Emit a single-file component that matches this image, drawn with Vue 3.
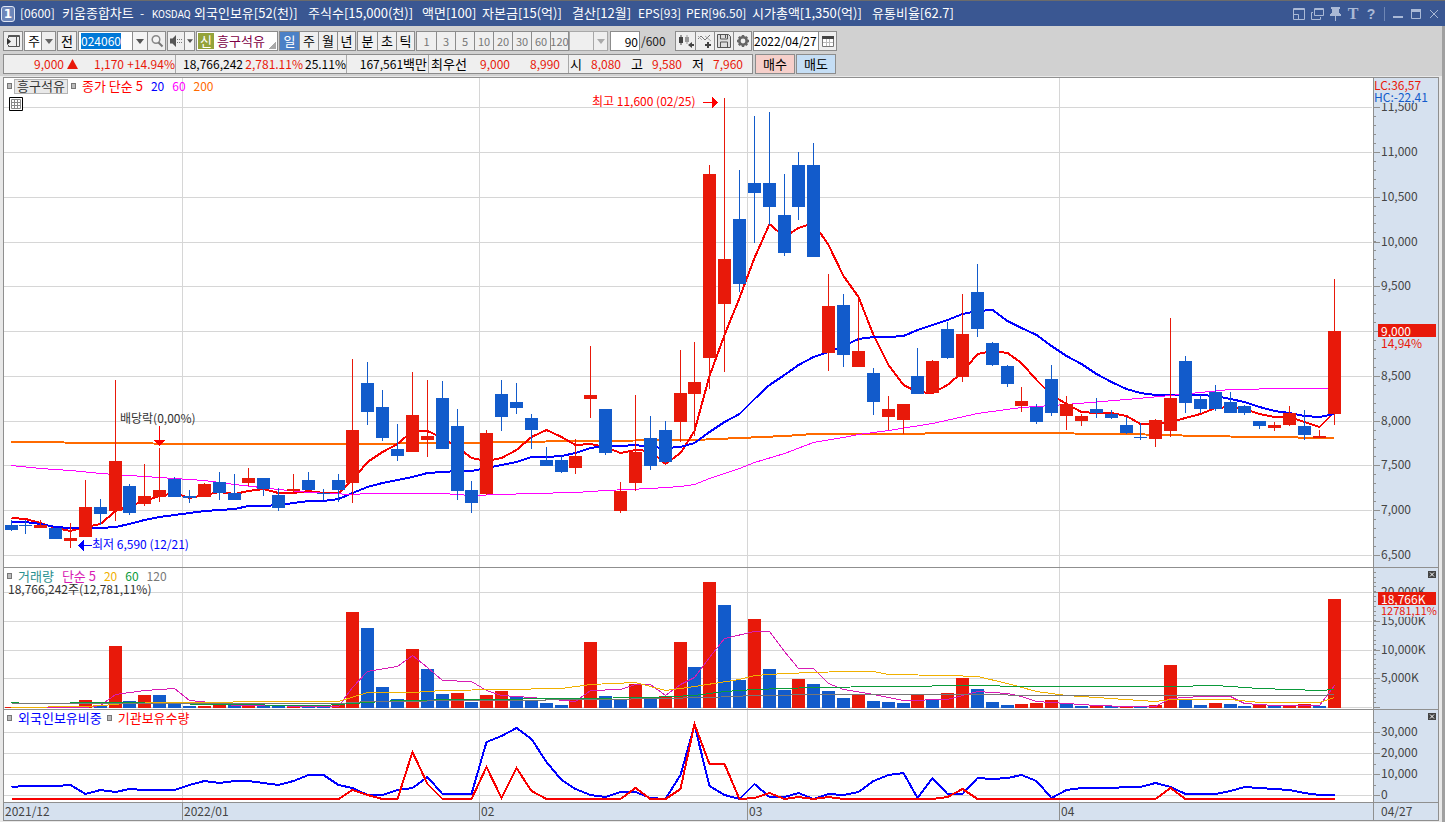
<script setup>
import { ref, onMounted } from 'vue'

const codeInput = ref(null)
const code = ref('024060')
const period = ref('일')
const count = ref('90')
const date = ref('2022/04/27')

onMounted(() => {
  codeInput.value.focus()
  codeInput.value.select()
})

const titleParts = [
  '[0600]', '키움종합차트', '-', 'KOSDAQ', '외국인보유[52(천)]', '주식수[15,000(천)]', '액면[100]',
  '자본금[15(억)]', '결산[12월]', 'EPS[93]', 'PER[96.50]', '시가총액[1,350(억)]', '유통비율[62.7]',
]
// Each title field takes one cell per half-width character and two per Hangul syllable.
const cellWidth = (s) => ([...s].reduce((n, c) => n + (c > '\u1100' ? 2 : 1), 0) + 1) * 6

const dayPeriods = ['일', '주', '월', '년']
const tickPeriods = ['분', '초', '틱']
const minutes = ['1', '3', '5', '10', '20', '30', '60', '120']

const PLOT = { x: 4, w: 1369 }
const cx = (i) => Math.floor(11 + i * 14.867)

const R = 'up'
const B = 'down'
// high, body top, body bottom, low
const candles = [
  [520, 525, 530, 531, B], [520, 525, 526, 534, B], [520, 525, 528, 528, R], [528, 528, 539, 539, B], [523, 538, 541, 548, R],
  [480, 507, 537, 537, R], [499, 507, 514, 525, B], [380, 461, 511, 521, R], [484, 486, 513, 515, B], [464, 496, 504, 506, R],
  [448, 490, 497, 502, R], [477, 479, 497, 497, B], [490, 496, 498, 503, B], [483, 484, 497, 497, R], [472, 482, 493, 500, B],
  [474, 493, 500, 500, B], [468, 478, 483, 486, R], [478, 478, 489, 496, B], [488, 495, 508, 511, B], [474, 489, 491, 492, R],
  [472, 480, 490, 490, B], [489, 493, 494, 500, B], [474, 480, 490, 502, B], [359, 430, 483, 503, R], [362, 383, 412, 425, B],
  [390, 407, 438, 441, B], [424, 449, 456, 461, B], [372, 415, 452, 452, R], [380, 436, 440, 457, R], [381, 398, 449, 449, B],
  [409, 426, 491, 500, B], [481, 490, 503, 513, B], [430, 433, 494, 495, R], [380, 394, 417, 431, B], [383, 402, 408, 414, B],
  [414, 418, 430, 449, B], [447, 460, 466, 466, B], [456, 460, 472, 473, B], [439, 456, 468, 474, R], [346, 395, 399, 418, R],
  [409, 409, 453, 455, B], [482, 491, 511, 513, R], [395, 452, 483, 491, R], [416, 438, 466, 470, B], [421, 430, 462, 463, B],
  [350, 393, 422, 442, R], [342, 382, 394, 436, R], [165, 174, 358, 389, R], [98, 259, 304, 372, R], [170, 219, 284, 292, B],
  [116, 183, 193, 243, B], [112, 183, 207, 225, B], [174, 215, 253, 256, B], [152, 165, 207, 220, B], [143, 165, 257, 257, B],
  [274, 306, 353, 371, R], [294, 305, 355, 367, B], [300, 351, 367, 367, R], [368, 373, 402, 415, B], [396, 409, 417, 430, R],
  [404, 404, 420, 434, R], [348, 376, 394, 394, B], [360, 361, 393, 393, R], [322, 329, 358, 359, B], [294, 334, 377, 382, R],
  [264, 292, 329, 337, B], [342, 343, 365, 366, B], [365, 366, 384, 387, B], [387, 401, 406, 412, R], [404, 407, 422, 424, B],
  [365, 379, 413, 416, B], [396, 404, 416, 430, R], [414, 416, 421, 426, R], [398, 409, 413, 418, B], [410, 414, 418, 419, B],
  [417, 425, 433, 434, B], [423, 437, 438, 440, B], [419, 420, 439, 447, R], [318, 398, 431, 437, R], [356, 361, 403, 413, B],
  [395, 399, 409, 413, B], [385, 392, 409, 411, B], [392, 402, 413, 413, B], [405, 406, 413, 415, B], [421, 421, 426, 429, B],
  [422, 425, 428, 431, R], [406, 413, 425, 426, R], [410, 426, 435, 440, B], [430, 436, 438, 438, R], [279, 331, 414, 425, R],
]

const V = {
  top: [707, 707, 707, 707, 707, 700, 706, 646, 701, 695, 695, 704, 706, 706, 705, 705, 706, 706, 706, 706, 706, 706, 704,
    612, 628, 687, 699, 649, 669, 694, 693, 702, 695, 691, 696, 700, 703, 705, 700, 642, 696, 700, 684, 697, 696, 642, 667,
    582, 605, 680, 619, 669, 690, 679, 684, 691, 698, 695, 701, 702, 703, 694, 699, 693, 678, 689, 702, 705, 704, 703, 700,
    704, 706, 705, 706, 706, 707, 705, 665, 700, 705, 703, 704, 706, 705, 706, 706, 704, 706, 599],
  dir: 'RRRRRRBRBRBBBRRBRBBRBBRRBBBRBBRBRRBBBBRRBBRBRRBRBBRBBRBBBRBBBRBRRBBBRRRBBRBRBRRBBRBBRBRRBR',
}

// Sparse [index, y] points joined by straight segments.
const ma5 = [518, 519, 523, 528, 531, 527, 524, 511, 506, 501, 496, 493, 498, 495, 492, 494, 491, 489, 493, 493, 491, 493, 493,
  480, 462, 452, 444, 431, 431, 438, 447, 458, 461, 458, 450, 437, 430, 437, 445, 444, 447, 453, 450, 451, 464, 453, 431, 376,
  335, 298, 258, 224, 237, 228, 223, 245, 276, 297, 335, 365, 385, 392, 393, 385, 372, 354, 351, 353, 363, 380, 395, 404, 412,
  413, 413, 416, 424, 424, 422, 418, 414, 408, 407, 409, 414, 417, 417, 422, 427, 412].map((y, i) => [i, y])
const ma20 = [522, 522, 524, 527, 528, 528, 528, 527, 524, 520, 517, 515, 513, 511, 510, 509, 506, 506, 505, 503, 501, 501,
  499, 493, 487, 483, 480, 477, 473, 472, 471, 471, 468, 465, 462, 457, 457, 456, 453, 448, 446, 446, 445, 447, 448, 447, 443,
  432, 422, 414, 399, 385, 375, 365, 357, 352, 346, 339, 337, 337, 336, 330, 325, 320, 314, 311, 310, 321, 328, 335, 346, 356,
  364, 374, 382, 389, 393, 395, 395, 395, 395, 396, 399, 402, 407, 411, 413, 416, 417, 414].map((y, i) => [i, y])
const ma60 = [[0, 465], [2, 468], [4, 470], [6, 473], [8, 475], [10, 477], [13, 480], [15, 484], [18, 489], [20, 492], [23, 494],
  [24, 493], [29, 493], [31, 495], [33, 494], [35, 493], [38, 492], [40, 490], [43, 488], [45, 486], [46, 484], [47, 478],
  [49, 468], [50, 462], [52, 453], [54, 442], [56, 437], [57, 434], [59, 430], [62, 423], [65, 413], [68, 407], [71, 404],
  [75, 399], [78, 395], [80, 392], [82, 389], [86, 388], [89, 388]]
const ma200 = [[0, 442], [7, 443], [12, 444], [22, 444], [30, 443], [34, 442], [38, 441], [46, 440], [49, 438], [52, 436],
  [54, 434], [60, 434], [63, 433], [68, 433], [75, 434], [80, 436], [84, 437], [89, 438]]

const v5 = [[0, 707], [5, 707], [6, 705], [7, 694], [9, 690], [11, 688], [12, 700], [14, 703], [15, 705], [22, 706], [23, 687],
  [24, 671], [26, 666], [27, 655], [28, 667], [29, 680], [31, 681], [32, 690], [33, 695], [35, 697], [38, 701], [39, 690],
  [41, 689], [42, 684], [43, 684], [44, 695], [45, 684], [46, 677], [47, 657], [48, 638], [50, 631], [51, 631], [52, 651],
  [53, 668], [54, 668], [55, 683], [56, 689], [58, 694], [60, 700], [63, 699], [65, 691], [67, 693], [68, 696], [69, 701],
  [71, 703], [73, 705], [75, 706], [77, 706], [78, 698], [80, 696], [82, 696], [83, 703], [85, 705], [88, 705], [89, 685]]
const v20 = [[0, 707], [5, 706], [7, 704], [8, 702], [22, 701], [24, 692], [27, 692], [29, 690], [33, 689], [37, 688], [39, 684],
  [42, 682], [43, 686], [44, 690], [46, 686], [49, 679], [50, 675], [52, 673], [56, 671], [58, 671], [59, 674], [63, 675],
  [65, 676], [67, 683], [69, 691], [71, 695], [76, 700], [77, 701], [78, 699], [82, 699], [84, 702], [88, 702], [89, 697]]
const v60 = [[0, 702], [1, 703], [7, 702], [11, 703], [13, 704], [21, 705], [23, 703], [26, 700], [31, 699], [38, 698], [43, 697],
  [46, 695], [48, 691], [50, 689], [54, 687], [59, 686], [65, 685], [68, 686], [78, 686], [81, 685], [84, 688], [88, 690], [89, 689]]
const v120 = [[0, 703], [22, 703], [24, 701], [32, 700], [40, 699], [47, 697], [50, 695], [55, 694], [64, 694], [70, 695], [88, 695], [89, 694]]

const foreign = [787, 786, 786, 786, 785, 794, 790, 792, 789, 790, 790, 790, 785, 781, 783, 781, 781, 783, 785, 781, 775, 775,
  785, 788, 795, 795, 790, 788, 777, 794, 794, 794, 742, 736, 728, 739, 762, 780, 789, 795, 797, 792, 792, 798, 799, 775, 725,
  786, 795, 799, 784, 797, 797, 793, 799, 794, 795, 792, 781, 775, 773, 798, 778, 794, 794, 778, 779, 778, 775, 781, 798, 790,
  788, 788, 788, 787, 787, 783, 787, 794, 794, 794, 791, 787, 788, 789, 790, 793, 795, 795].map((y, i) => [i, y])
const inst = [[0, 799], [22, 799], [23, 790], [24, 795], [25, 799], [26, 799], [27, 752], [28, 784], [29, 799], [31, 799],
  [32, 767], [33, 798], [34, 768], [35, 791], [36, 799], [41, 799], [42, 788], [43, 799], [44, 799], [45, 789], [46, 724],
  [47, 764], [48, 764], [49, 799], [50, 798], [51, 793], [52, 799], [53, 797], [54, 799], [55, 797], [56, 799], [62, 799],
  [63, 797], [64, 789], [65, 799], [77, 799], [78, 788], [79, 799], [89, 799]]

const pts = (list) => list.map(([i, y]) => `${cx(i) + 0.5},${y}`).join(' ')
// One-pixel strokes run through pixel centres so that flat stretches stay visible.
const thinPts = (list) => list.map(([i, y]) => `${cx(i) + 0.5},${y + 0.5}`).join(' ')

const months = [
  { x: 4, label: '2021/12' }, { x: 182, label: '2022/01' }, { x: 479, label: '02' },
  { x: 747, label: '03' }, { x: 1059, label: '04' },
]
const left = (x) => `${((x - PLOT.x) / PLOT.w) * 100}%`

const range = (from, to, n) => Array.from({ length: n }, (_, k) => Math.round(from + (k * (to - from)) / (n - 1)))
const price = {
  y: 78, h: 489,
  major: [107, 152, 197, 242, 286, 331, 376, 421, 465, 510, 555],
  labels: ['11,500', '11,000', '10,500', '10,000', '9,500', '9,000', '8,500', '8,000', '7,500', '7,000', '6,500'],
  minor: range(107, 555, 51),
}
const volume = {
  y: 568, h: 141,
  major: [592, 621, 650, 678, 707],
  labels: ['20,000K', '15,000K', '10,000K', '5,000K', ''],
  minor: range(572, 707, 29),
}
const holding = {
  y: 710, h: 92,
  major: [732, 753, 774, 795],
  labels: ['30,000', '20,000', '10,000', '0'],
  minor: range(722, 795, 8),
}
const top = (p, y) => `${((y - p.y) / p.h) * 100}%`
const viewBox = (p) => `${PLOT.x} ${p.y} ${PLOT.w} ${p.h}`
</script>

<template>
  <div class="window">
    <header class="title-bar">
      <span class="badge">1</span>
      <h1 class="title">
        <span v-for="p in titleParts" :key="p" :class="{ latin: p < '\u1100', tight: p === 'KOSDAQ' }" :style="{ width: cellWidth(p) + 'px' }">{{ p }}</span>
      </h1>
      <div class="win-tools">
        <button type="button" aria-label="창 붙이기"><svg width="14" height="14" viewBox="0 0 14 14"><path d="M1.500 1.500h11v11h-11zM1.500 7.500h5v5M1 2.500h12" /></svg></button>
        <button type="button" aria-label="창 복제"><svg width="14" height="14" viewBox="0 0 14 14"><path d="M4.500 1.500h9v7h-9zM4 2.500h9M3 5.500H1.500v7h9V10" /></svg></button>
        <button type="button" aria-label="고정"><svg width="14" height="14" viewBox="0 0 14 14"><path class="solid" d="M3 0h9v2h-1v4h1v1h1v2H2V7h1V6h1V2H3zM7 9h1v5H7z" /></svg></button>
        <button type="button" class="serif">T</button>
        <button type="button" class="quest">?</button>
        <i class="split"></i>
        <button type="button" aria-label="최소화"><svg width="14" height="14" viewBox="0 0 14 14"><path class="solid" d="M2 9h10v2H2z" /></svg></button>
        <button type="button" aria-label="최대화"><svg width="14" height="14" viewBox="0 0 14 14"><path d="M2.500 3.500h9v8h-9z" /><path class="solid" d="M2 2h10v3H2z" /></svg></button>
        <button type="button" aria-label="닫기"><svg width="14" height="14" viewBox="0 0 14 14"><path d="M3 3l8 8M11 3l-8 8" /></svg></button>
      </div>
    </header>

    <section class="tools">
      <div class="row">
        <button type="button" class="box sq" aria-label="메뉴 펼치기">
          <svg width="16" height="16" viewBox="0 0 16 16"><path d="M3.500 5V2.500h11v11h-11V12M3 3.500h11M11.500 4v9" fill="none" stroke="#555" /><path d="M2 5l4 3.500L2 12z" fill="#333" /></svg>
        </button>
        <label class="box pick kind">
          <select aria-label="종목 구분"><option>주</option></select>
          <span class="arrow"><svg width="8" height="5" viewBox="0 0 8 5"><path d="M0 0h8L4 5z" /></svg></span>
        </label>
        <button type="button" class="box sq">전</button>
        <div class="box code">
          <input ref="codeInput" v-model="code" aria-label="종목코드" />
          <button type="button" class="drop" aria-label="종목 목록"><svg width="8" height="5" viewBox="0 0 8 5"><path d="M0 0h8L4 5z" /></svg></button>
          <button type="button" class="face" aria-label="검색">
            <svg width="14" height="14" viewBox="0 0 14 14"><circle cx="6" cy="5.500" r="3.800" fill="#f4f4f4" stroke="#888" stroke-width="1.500" /><path d="M8.500 8.500l4 4" stroke="#777" stroke-width="2" /></svg>
          </button>
        </div>
        <div class="box sound">
          <button type="button" class="face" aria-label="소리">
            <svg width="14" height="14" viewBox="0 0 14 14"><path d="M1 4.500h2.500L7 1v12L3.500 9.500H1z" fill="#555" /><path d="M8 5h1v1H8zM8 8h1v1H8zM10 5h1v1h-1zM10 8h1v1h-1zM12 5h1v1h-1zM12 8h1v1h-1z" fill="#777" /></svg>
          </button>
          <button type="button" class="drop slim" aria-label="소리 설정"><svg width="6" height="4" viewBox="0 0 8 5"><path d="M0 0h8L4 5z" /></svg></button>
        </div>
        <div class="box name"><span class="new">신</span><span>흥구석유</span><i class="corner"></i></div>
        <div class="box group">
          <button v-for="p in dayPeriods" :key="p" type="button" :class="{ on: p === period }" @click="period = p">{{ p }}</button>
        </div>
        <div class="box group">
          <button v-for="p in tickPeriods" :key="p" type="button">{{ p }}</button>
        </div>
        <div class="box group dim">
          <button v-for="m in minutes" :key="m" type="button">{{ m }}</button>
        </div>
        <label class="box pick blank">
          <select aria-label="분 단위" disabled><option></option></select>
          <span class="arrow"><svg width="8" height="5" viewBox="0 0 8 5"><path d="M0 0h8L4 5z" /></svg></span>
        </label>
        <input v-model="count" class="box count" aria-label="표시 봉수" />
        <span class="total">/600</span>
        <div class="box icons">
          <button type="button" aria-label="봉 추가">
            <svg width="16" height="16" viewBox="0 0 16 16"><path d="M1 4h4v6H1zM2.500 2h1v10h-1z" fill="#444" /><path d="M7 4h4v5H7zM8.500 2h1v9h-1z" fill="#999" /><path d="M14 9v6l-4-3zM13 11h3v2h-3z" fill="#444" /></svg>
          </button>
          <button type="button" aria-label="지표 추가">
            <svg width="16" height="16" viewBox="0 0 16 16"><path d="M1 6l3-3 4 4 5-5" fill="none" stroke="#777" /><path d="M1 3l4 4M8 3l6 5" fill="none" stroke="#aaa" /><path d="M8 12h6M11 9v6" stroke="#444" stroke-width="2" /></svg>
          </button>
          <button type="button" aria-label="저장">
            <svg width="16" height="16" viewBox="0 0 16 16"><path d="M1.500 1.500h11l2 2v11h-13z" fill="#ddd" stroke="#555" /><path d="M4.500 2v4h7V2M9.500 2v3M4.500 14V9h7v5" fill="none" stroke="#555" /></svg>
          </button>
          <button type="button" aria-label="설정">
            <svg width="16" height="16" viewBox="0 0 16 16"><circle cx="8" cy="8" r="3.700" fill="none" stroke="#666" stroke-width="2.600" /><path d="M8 2v2M8 12v2M2 8h2M12 8h2M3.800 3.800l1.400 1.400M10.800 10.800l1.400 1.400M3.800 12.200l1.400-1.400M10.800 5.200l1.400-1.400" stroke="#666" stroke-width="2.400" /></svg>
          </button>
        </div>
        <div class="box date">
          <input v-model="date" aria-label="기준일" />
          <button type="button" aria-label="달력">
            <svg width="14" height="14" viewBox="0 0 14 14"><path d="M1.500 3.500h11v9h-11z" fill="#fff" stroke="#777" /><path d="M1 2h12v3H1z" fill="#444" /><path d="M2 8.500h10M5.500 5v7M8.500 5v7" stroke="#bbb" /></svg>
          </button>
        </div>
      </div>

      <div class="row">
        <div class="box quote">
          <div class="seg q1 red"><span>9,000</span><svg width="11" height="10" viewBox="0 0 11 10"><path d="M5.500 0L11 10H0z" fill="#e8190a" /></svg><span>1,170</span><span>+14.94%</span></div>
          <div class="seg q2"><span>18,766,242</span><span class="red">2,781.11%</span><span>25.11%</span></div>
          <div class="seg q3"><span>167,561<b>백만</b></span></div>
          <div class="seg q4"><b>최우선</b><span class="red">9,000</span><span class="red">8,990</span></div>
          <div class="seg q5"><b>시</b><span class="red">8,080</span><b>고</b><span class="red">9,580</span><b>저</b><span class="red">7,960</span></div>
        </div>
        <button type="button" class="box trade buy">매수</button>
        <button type="button" class="box trade sell">매도</button>
      </div>
    </section>

    <main class="chart">
      <section class="panel price">
        <div class="plot">
          <svg class="canvas" :viewBox="viewBox(price)" preserveAspectRatio="none" shape-rendering="crispEdges">
            <g class="grid">
              <rect v-for="y in price.major" :key="y" x="4" :y="y" width="1368" height="1" />
              <rect v-for="m in months.slice(1)" :key="m.x" :x="m.x" y="78" width="1" height="489" />
            </g>
            <polyline :points="pts(ma200)" class="orange thick" />
            <polyline :points="pts(ma5)" class="red5 thick" />
            <polyline :points="pts(ma20)" class="blue thick" />
            <polyline :points="thinPts(ma60)" class="pink" />
            <g v-for="(c, i) in candles" :key="i" :class="c[4]">
              <rect :x="cx(i)" :y="c[0]" width="1" :height="c[3] - c[0]" />
              <rect :x="cx(i) - 6" :y="c[1]" width="13" :height="c[2] - c[1]" />
            </g>
            <g class="mark-red"><rect x="703" y="102" width="10" height="1" /><path d="M712 97v11l6-5.500z" /></g>
            <g class="mark-blue"><rect x="83" y="545" width="9" height="1" /><path d="M84 540v11l-6-5.500z" /></g>
            <g class="mark-red"><rect x="159" y="426" width="1" height="16" /><path d="M154 440h11l-5.500 6z" /></g>
          </svg>
          <div class="legend">
            <i class="knob"></i><button type="button" class="symbol">흥구석유</button><i class="knob"></i>
            <span class="c-red">종가 단순 5</span><span class="num c-blue">20</span><span class="num c-pink">60</span><span class="num c-orange">200</span>
          </div>
          <button type="button" class="table-btn" aria-label="표 보기">
            <svg width="14" height="14" viewBox="0 0 14 14"><path d="M.5.500h13v13H.5z" fill="#fff" stroke="#000" /><path d="M2.500 2.500h9v9h-9zM2.500 5.500h9M2.500 8.500h9M5.500 2v9M8.500 2v9" fill="none" stroke="#888" /></svg>
          </button>
          <span class="note c-red" :style="{ left: left(592), top: top(price, 101) }">최고 11,600 (02/25)</span>
          <span class="note c-blue" :style="{ left: left(92), top: top(price, 544) }">최저 6,590 (12/21)</span>
          <span class="note" :style="{ left: left(120), top: top(price, 418) }">배당락(0,00%)</span>
        </div>
        <div class="axis">
          <svg class="canvas" :viewBox="`0 ${price.y} 64 ${price.h}`" preserveAspectRatio="none" shape-rendering="crispEdges">
            <rect v-for="y in price.minor" :key="'n' + y" x="0" :y="y" width="2" height="1" />
            <rect v-for="y in price.major" :key="y" x="0" :y="y" width="6" height="1" />
          </svg>
          <span v-for="(l, k) in price.labels" :key="l" class="tick" :style="{ top: top(price, price.major[k]) }">{{ l }}</span>
          <span class="extreme"><span class="up-text">LC:36,57</span><span class="down-text">HC:-22,41</span></span>
          <span class="rate" :style="{ top: top(price, 342) }">14,94%</span>
          <span class="now" :style="{ top: top(price, 330) }">9,000</span>
        </div>
      </section>

      <section class="panel volume">
        <div class="plot">
          <svg class="canvas" :viewBox="viewBox(volume)" preserveAspectRatio="none" shape-rendering="crispEdges">
            <g class="grid">
              <rect v-for="y in volume.major" :key="y" x="4" :y="y" width="1368" height="1" />
              <rect v-for="m in months.slice(1)" :key="m.x" :x="m.x" y="568" width="1" height="141" />
            </g>
            <rect v-for="(y, i) in V.top" :key="i" :class="V.dir[i] === 'R' ? 'up' : 'down'" :x="cx(i) - 6" :y="y" width="13" :height="708 - y" />
            <polyline :points="thinPts(v5)" class="magenta" />
            <polyline :points="thinPts(v20)" class="yellow" />
            <polyline :points="thinPts(v60)" class="green" />
            <polyline :points="thinPts(v120)" class="gray" />
          </svg>
          <div class="legend">
            <i class="knob"></i><span class="c-teal">거래량</span><span class="c-magenta">단순 5</span><span class="num c-yellow">20</span><span class="num c-green">60</span><span class="num c-gray">120</span>
          </div>
          <div class="legend second">18,766,242주(12,781,11%)</div>
        </div>
        <div class="axis">
          <svg class="canvas" :viewBox="`0 ${volume.y} 64 ${volume.h}`" preserveAspectRatio="none" shape-rendering="crispEdges">
            <rect v-for="y in volume.minor" :key="'n' + y" x="0" :y="y" width="2" height="1" />
            <rect v-for="y in volume.major" :key="y" x="0" :y="y" width="6" height="1" />
          </svg>
          <span v-for="(l, k) in volume.labels" :key="k" class="tick" :style="{ top: top(volume, volume.major[k]) }">{{ l }}</span>
          <span class="rate small" :style="{ top: top(volume, 610) }">12781,11%</span>
          <span class="now" :style="{ top: top(volume, 598) }">18,766K</span>
          <button type="button" class="close" aria-label="거래량 닫기"><svg width="8" height="7" viewBox="0 0 8 7"><path d="M2 1.500l4 4M6 1.500l-4 4" stroke="#fff" /></svg></button>
        </div>
      </section>

      <section class="panel holding">
        <div class="plot">
          <svg class="canvas" :viewBox="viewBox(holding)" preserveAspectRatio="none" shape-rendering="crispEdges">
            <g class="grid">
              <rect v-for="y in holding.major" :key="y" x="4" :y="y" width="1368" height="1" />
              <rect v-for="m in months.slice(1)" :key="m.x" :x="m.x" y="710" width="1" height="92" />
            </g>
            <polyline :points="pts(foreign)" class="blue thick" />
            <polyline :points="pts(inst)" class="red5 thick" />
          </svg>
          <div class="legend">
            <i class="knob"></i><span class="c-blue">외국인보유비중</span><i class="knob"></i><span class="c-red">기관보유수량</span>
          </div>
        </div>
        <div class="axis">
          <svg class="canvas" :viewBox="`0 ${holding.y} 64 ${holding.h}`" preserveAspectRatio="none" shape-rendering="crispEdges">
            <rect v-for="y in holding.minor" :key="'n' + y" x="0" :y="y" width="2" height="1" />
            <rect v-for="y in holding.major" :key="y" x="0" :y="y" width="6" height="1" />
          </svg>
          <span v-for="(l, k) in holding.labels" :key="l" class="tick" :style="{ top: top(holding, holding.major[k]) }">{{ l }}</span>
          <button type="button" class="close" aria-label="보유 지표 닫기"><svg width="8" height="7" viewBox="0 0 8 7"><path d="M2 1.500l4 4M6 1.500l-4 4" stroke="#fff" /></svg></button>
        </div>
      </section>

      <footer class="dates">
        <div class="months"><span v-for="m in months" :key="m.x" :style="{ left: left(m.x) }">{{ m.label }}</span></div>
        <div class="last">04/27</div>
      </footer>
    </main>
  </div>
</template>

<style>
body {
  margin: 0;
}
</style>

<style scoped>
.window {
  display: flex;
  flex-direction: column;
  height: 100vh;
  min-height: 480px;
  min-width: 960px;
  overflow: hidden;
  background: #a0a0a0;
  color: #000;
  font: 13px/16px "Noto Sans CJK KR", sans-serif;
}
.window * {
  box-sizing: border-box;
}
button,
input,
select {
  margin: 0;
  padding: 0;
  border: 0;
  border-radius: 0;
  outline: 0;
  background: none;
  color: inherit;
  font: inherit;
}
button {
  display: flex;
  align-items: center;
  justify-content: center;
  white-space: nowrap;
}

.title-bar {
  display: flex;
  align-items: center;
  flex: none;
  height: 26px;
  padding: 0 4px 0 1px;
  border-top: 1px solid #6b6b6b;
  background: #3a5792;
  color: #fff;
}
.badge {
  width: 14px;
  height: 16px;
  border: 1px solid #dfe6f3;
  border-radius: 3px;
  background: #6d86b9;
  font: bold 12px/14px "DejaVu Sans", sans-serif;
  text-align: center;
}
.title {
  display: flex;
  align-items: baseline;
  flex: 1;
  min-width: 0;
  margin: 0 0 0 5px;
  font: inherit;
  line-height: 24px;
  white-space: nowrap;
}
.title span {
  flex: none;
}
.title .latin {
  font-size: 12px;
}
.title .tight {
  font-family: Roboto, sans-serif;
  font-size: 10px;
}
.win-tools {
  display: flex;
  align-items: center;
  gap: 4px;
  color: #aab9d6;
}
.win-tools button {
  width: 14px;
  height: 16px;
}
.win-tools path {
  fill: none;
  stroke: #aab9d6;
}
.win-tools .solid {
  fill: #aab9d6;
  stroke: none;
}
.win-tools .serif {
  font: bold 16px/16px "Liberation Serif", serif;
}
.win-tools .quest {
  font: bold 14px/16px "Liberation Sans", sans-serif;
}
.split {
  width: 1px;
  height: 14px;
  margin: 0 2px;
  background: #6f87b5;
}

.tools {
  display: flex;
  flex-direction: column;
  gap: 3px;
  flex: none;
  height: 50px;
  margin-right: 3px;
  padding: 5px 3px 0;
  background: #d1d1d1;
}
.row {
  display: flex;
  gap: 1px;
  flex: none;
}
.box {
  display: flex;
  flex: none;
  height: 20px;
  border: 1px solid #8c8c8c;
  background: #efefef;
}
.box.sq {
  width: 20px;
}
.pick {
  position: relative;
  background: #fff;
}
.pick select {
  width: 100%;
  padding-left: 3px;
  appearance: none;
}
.arrow {
  position: absolute;
  top: 0;
  right: 0;
  display: flex;
  align-items: center;
  justify-content: center;
  width: 14px;
  height: 18px;
  border-left: 1px solid #8c8c8c;
  background: #efefef;
  fill: #666;
  pointer-events: none;
}
.kind {
  width: 32px;
}
.blank {
  width: 39px;
  margin-left: -1px;
  margin-right: 1px;
  background: #efefef;
  border-color: #a8a8a8;
}
.blank .arrow {
  border-color: #a8a8a8;
  fill: #aaa;
}
.code {
  width: 88px;
  background: #fff;
  font-size: 12px;
}
.code input {
  flex: 1;
  min-width: 0;
  padding-left: 2px;
}
.code input::selection {
  background: #0078d7;
  color: #fff;
}
.drop {
  width: 15px;
  border-left: 1px solid #8c8c8c;
  background: #f4f4f4;
  fill: #555;
}
.drop.slim {
  width: 10px;
}
.face {
  width: 18px;
  border-left: 1px solid #8c8c8c;
  background: #efefef;
}
.sound {
  width: 28px;
}
.sound .face {
  width: 16px;
  border-left: 0;
}
.name {
  position: relative;
  align-items: center;
  gap: 3px;
  width: 82px;
  padding-left: 1px;
  background: #fff;
  color: #7d0045;
}
.new {
  width: 16px;
  height: 16px;
  background: #94a33a;
  color: #fff;
  text-align: center;
}
.corner {
  position: absolute;
  right: 1px;
  bottom: 1px;
  width: 7px;
  height: 7px;
  background: linear-gradient(135deg, transparent 50%, #a9a9a9 50%);
}
.group button {
  width: 19px;
}
.group button:last-child {
  width: 18px;
}
.group button + button {
  border-left: 1px solid #8c8c8c;
}
.group .on {
  background: #4b80c6;
  color: #fff;
}
.dim {
  color: #777;
  font-size: 11px;
}
.box.count {
  width: 30px;
  padding-right: 1px;
  background: #fff;
  font-size: 12px;
  text-align: right;
}
.total {
  width: 33px;
  color: #222;
  font-size: 12px;
  line-height: 20px;
}
.icons button {
  width: 19px;
}
.icons button:last-child {
  width: 18px;
}
.icons button + button {
  border-left: 1px solid #8c8c8c;
}
.date {
  width: 84px;
  background: #fff;
  font-size: 12px;
}
.date input {
  flex: 1;
  min-width: 0;
}
.date button {
  width: 18px;
  border-left: 1px solid #8c8c8c;
  background: #efefef;
}

.quote {
  width: 750px;
  margin-right: 1px;
  font-size: 12px;
}
.quote b {
  font-size: 13px;
  font-weight: 400;
}
.seg {
  display: grid;
  align-items: center;
  justify-items: end;
  white-space: nowrap;
}
.seg + .seg {
  border-left: 1px solid #a8a8a8;
}
.q1 {
  width: 171px;
  grid-template-columns: 60px 14px 46px 51px;
}
.q2 {
  width: 171px;
  grid-template-columns: 67px 60px 43px;
}
.q3 {
  width: 82px;
  grid-template-columns: 80px;
}
.q4 {
  width: 140px;
  grid-template-columns: 38px 43px 50px;
}
.q5 {
  flex: 1;
  grid-template-columns: 13px 39px 22px 39px 22px 39px;
}
.red {
  color: #e8190a;
}
.trade {
  width: 40px;
}
.buy {
  background: #f6cfca;
}
.sell {
  background: #c5def5;
}

.chart {
  display: flex;
  flex-direction: column;
  flex: 1;
  min-height: 0;
  margin-right: 3px;
  padding: 1px 3px 1px;
  background: #e8e8e8;
}
.panel,
.dates {
  display: flex;
  min-height: 0;
  border: 1px solid #8f8f8f;
  border-top: 0;
}
.price {
  flex: 489 1 0;
  border-top: 1px solid #8f8f8f;
}
.volume {
  flex: 141 1 0;
}
.holding {
  flex: 92 1 0;
}
.plot {
  position: relative;
  flex: 1;
  min-width: 0;
  background: #fff;
}
.axis {
  position: relative;
  flex: none;
  width: 65px;
  overflow: hidden;
  border-left: 1px solid #8f8f8f;
  background: #d6e1ef;
  font-size: 12px;
}
.canvas {
  position: absolute;
  inset: 0;
  width: 100%;
  height: 100%;
}
.axis .canvas {
  fill: #8f8f8f;
}
polyline {
  fill: none;
  stroke-width: 1;
}
.thick {
  stroke-width: 2;
}
.grid {
  fill: #d6d6d6;
}
.up {
  fill: #e8190a;
}
.down {
  fill: #125bcb;
}
.mark-red {
  fill: #f00;
}
.mark-blue {
  fill: #00f;
}
.red5 {
  stroke: #f80000;
}
.blue {
  stroke: #00f;
}
.pink {
  stroke: #f0f;
}
.orange {
  stroke: #ff6a00;
}
.magenta {
  stroke: #d81bb4;
}
.yellow {
  stroke: #f0b000;
}
.green {
  stroke: #0a9a3a;
}
.gray {
  stroke: #777;
}

.legend {
  position: relative;
  display: flex;
  align-items: center;
  gap: 8px;
  height: 16px;
  padding-left: 3px;
  white-space: nowrap;
}
.legend.second {
  margin-top: -3px;
  padding-left: 4px;
  color: #333;
  font-size: 12px;
}
.num {
  font-size: 12px;
}
.knob {
  width: 5px;
  height: 6px;
  border: 1px solid #777;
  background: #bbb;
}
.knob + span {
  margin-left: -2px;
}
span + .knob {
  margin-left: -3px;
}
.knob + .symbol {
  margin-left: -6px;
}
.symbol + .knob {
  margin-left: -5px;
}
.symbol {
  width: 54px;
  height: 15px;
  border: 1px solid #b4b4b4;
  background: #e9e9e9;
  color: #333;
}
.table-btn {
  position: absolute;
  left: 5px;
  top: 19px;
}
.note {
  position: absolute;
  margin-top: -8px;
  color: #333;
  font-size: 12px;
  white-space: nowrap;
}
.c-red {
  color: #f00;
}
.c-blue {
  color: #00f;
}
.c-pink {
  color: #f0f;
}
.c-orange {
  color: #ff6a00;
}
.c-teal {
  color: #2a9090;
}
.c-magenta {
  color: #d81bb4;
}
.c-yellow {
  color: #f0b000;
}
.c-green {
  color: #0a9a3a;
}
.c-gray {
  color: #777;
}

.tick,
.rate,
.now {
  position: absolute;
  left: 7px;
  margin-top: -9px;
  color: #444;
}
.extreme {
  position: absolute;
  left: 0;
  top: 1px;
  display: grid;
  width: 100%;
  background: #d6e1ef;
  line-height: 12px;
}
.up-text,
.rate {
  color: #e8190a;
}
.down-text {
  color: #125bcb;
}
.now {
  left: 4px;
  right: 2px;
  margin-top: -6px;
  padding-left: 3px;
  background: #e8190a;
  color: #fff;
  line-height: 13px;
}
.rate {
  right: 1px;
  margin-top: -6px;
  background: #d6e1ef;
  line-height: 13px;
}
.rate.small {
  font-size: 11px;
}
.close {
  position: absolute;
  top: 3px;
  right: 2px;
  width: 8px;
  height: 7px;
  background: #444;
}

.dates {
  flex: none;
  height: 18px;
  background: #d6e1ef;
  color: #444;
  font-size: 12px;
}
.months {
  position: relative;
  flex: 1;
}
.months span {
  position: absolute;
  height: 17px;
  padding-left: 1px;
  border-left: 1px solid #8f8f8f;
}
.months span:first-child {
  border-left: 0;
}
.last {
  width: 65px;
  padding-left: 7px;
  border-left: 1px solid #8f8f8f;
}
</style>
